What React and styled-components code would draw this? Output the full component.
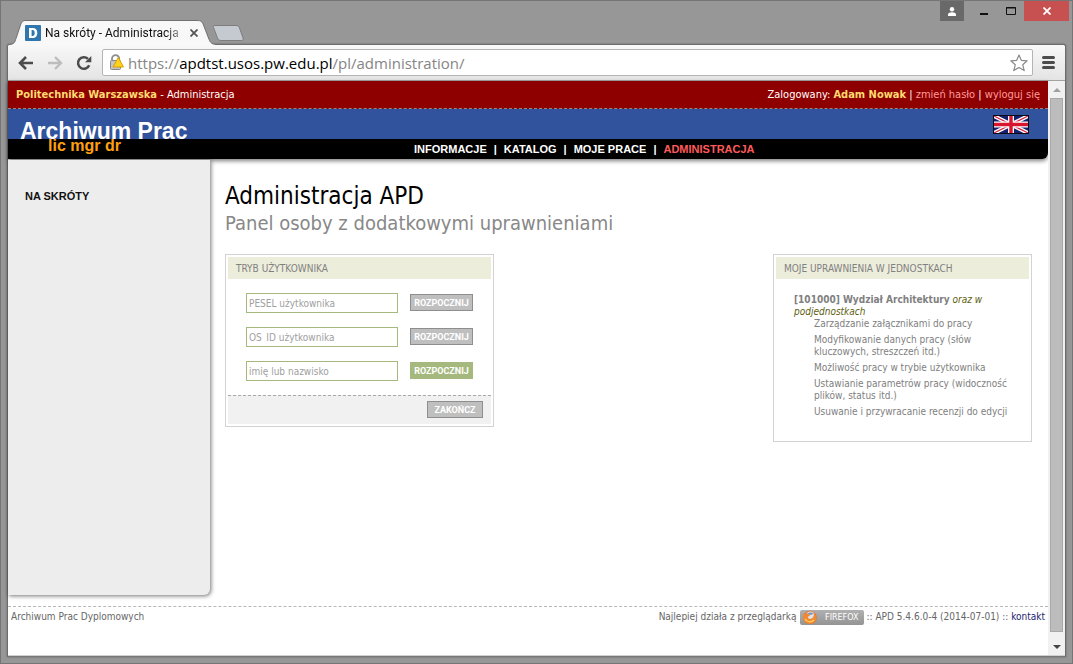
import React from 'react';
import styled, { createGlobalStyle } from 'styled-components';

const tahoma = "'DejaVu Sans Condensed', 'DejaVu Sans', sans-serif";
const arial = "'Liberation Sans', Arial, sans-serif";
const tabFont = "Roboto, 'Noto Sans', sans-serif";
const addressFont = "'Open Sans', 'Noto Sans', sans-serif";

const GlobalStyle = createGlobalStyle`
  * { box-sizing: border-box; }
  body { margin: 0; background: #979797; font-family: ${tahoma}; font-size: 10px; line-height: 12px; color: #808080; }
  h1, h2, p, ul { margin: 0; padding: 0; font-weight: normal; }
  ul { list-style: none; }
  a { text-decoration: none; color: inherit; }
  button { padding: 0; border: 0; background: none; color: inherit; font: inherit; }
`;

/* Browser window */

const Window = styled.div`
  display: flex;
  flex-direction: column;
  min-height: 100vh;
  padding: 0 6px 6px;
  border: 1px solid #757575;
  background: #979797;
`;

const TitleBar = styled.div`
  display: flex;
  justify-content: space-between;
  height: 43px;
  margin-right: -3px;
`;

const TabStrip = styled.div`
  display: flex;
  align-items: flex-end;
`;

const Tab = styled.div`
  position: relative;
  z-index: 1;
  display: flex;
  align-items: center;
  width: 206px;
  height: 25px;
  margin: 0 0 -1px 3px;
  padding: 0 18px 0 15px;
`;

const TabShape = styled.svg`
  position: absolute;
  left: 0;
  top: 0;
  z-index: -1;
`;

const TabTitle = styled.span`
  flex: 1;
  margin: 0 8px 0 4px;
  white-space: nowrap;
  font: 12px/16px ${tabFont};
  color: #111;
  mask-image: linear-gradient(to right, #000 88%, rgba(0, 0, 0, 0.3));
`;

const IconButton = styled.button`
  display: flex;
`;

const NewTab = styled.button`
  height: 16px;
  margin: 0 0 3px -4px;
`;

const Controls = styled.div`
  display: flex;
  height: 20px;
`;

const ControlButton = styled.button`
  display: flex;
  align-items: center;
  justify-content: ${(p) => p.$align || 'center'};
  width: ${(p) => p.$width}px;
  padding: 0 2px;
  background: ${(p) => p.$fill || 'transparent'};
`;

const Frame = styled.div`
  display: flex;
  flex: 1;
  flex-direction: column;
  border: 1px solid #6c6c6c;
  border-bottom-color: #777;
  border-radius: 3px 3px 0 0;
  background: #fff;
  box-shadow: 0 0 2px rgba(0, 0, 0, 0.4);
`;

const Toolbar = styled.div`
  display: flex;
  align-items: center;
  height: 36px;
  padding: 0 10px 0 10px;
  border-bottom: 1px solid #a2a2a2;
  border-radius: 2px 2px 0 0;
  background: linear-gradient(#f8f8f8, #e4e4e4);
`;

const ToolButton = styled.button`
  display: flex;
  align-items: center;
  width: 29px;
  height: 20px;
`;

const AddressBar = styled.div`
  display: flex;
  flex: 1;
  align-items: center;
  height: 27px;
  margin: 0 9px 0 -3px;
  padding: 0 4px 0 6px;
  border: 1px solid #b4b4b4;
  border-radius: 2px;
  background: #fff;
`;

const Address = styled.div`
  flex: 1;
  margin-left: 3px;
  font: 15px/22px ${addressFont};
  color: #858585;
  white-space: nowrap;

  b { font-weight: normal; color: #000; }
`;

const Viewport = styled.div`
  display: flex;
  flex: 1;
  border-bottom: 1px solid #d0d0d0;
`;

const Page = styled.div`
  display: flex;
  flex: 1;
  flex-direction: column;
  min-width: 0;
`;

const Scrollbar = styled.div`
  display: flex;
  flex-direction: column;
  align-items: center;
  width: 17px;
  background: #f1f1f1;
`;

const ScrollArrow = styled.button`
  display: flex;
  align-items: center;
  justify-content: center;
  width: 17px;
  height: 17px;
`;

const ScrollThumb = styled.div`
  flex: 1;
  width: 13px;
  margin-bottom: 6px;
  border: 1px solid #a8a8a8;
  background: #bcbcbc;
`;

/* Site header */

const Header = styled.header`
  border-radius: 0 0 6px 0;
  background: #000;
  box-shadow: 0 2px 4px rgba(0, 0, 0, 0.5);
`;

const TopBar = styled.div`
  display: flex;
  justify-content: space-between;
  height: 28px;
  padding: 7px 8px 0;
  border-bottom: 1px dashed #8c8c8c;
  background: #8e0000;
  font-size: 11px;
  line-height: 14px;
  color: #fff;

  b { color: #ffdb70; }
`;

const AccountLink = styled.a`
  color: #ff9c9c;
`;

const Banner = styled.div`
  display: flex;
  justify-content: space-between;
  height: 30px;
  padding: 6px 19px 0 12px;
  background: #31529c;
`;

const SiteName = styled.a`
  font: bold 23px/32px ${arial};
  color: #fff;
`;

const NavBar = styled.div`
  display: flex;
  align-items: center;
  height: 20px;
  padding-left: 40px;
`;

const Degrees = styled.span`
  align-self: flex-start;
  width: 366px;
  margin-top: -2px;
  font: bold 16px/18px ${arial};
  color: #ffa010;
`;

const Nav = styled.nav`
  display: flex;
  gap: 7px;
  font: bold 11px/14px ${arial};
  color: #fff;
`;

const NavLink = styled.a`
  color: ${(p) => (p.$active ? '#ff5a5a' : '#fff')};
`;

/* Site body */

const Body = styled.div`
  display: flex;
  flex: 1;
`;

const Sidebar = styled.aside`
  flex: 0 0 202px;
  margin: 1px 0 11px;
  padding: 29px 17px;
  border-radius: 0 0 6px 0;
  background: #ededed;
  box-shadow: 1px 1px 4px rgba(0, 0, 0, 0.55);
  font: bold 11px/14px ${arial};
  color: #111;
`;

const Main = styled.main`
  flex: 1;
  padding: 23px 16px 0 15px;
`;

const Title = styled.h1`
  font-size: 24px;
  line-height: 28px;
  color: #000;
`;

const Subtitle = styled.h2`
  font-size: 20px;
  line-height: 26px;
  color: #888;
`;

const Cards = styled.div`
  display: flex;
  align-items: flex-start;
  justify-content: space-between;
  margin-top: 18px;
`;

const Card = styled.section`
  width: ${(p) => p.$width}px;
  padding: 2px;
  border: 1px solid #d3d3d3;
  background: #fff;
`;

const CardTitle = styled.h2`
  padding: 6px 8px 4px;
  background: #ededdc;
  font-size: 10px;
  line-height: 12px;
  color: #808080;
`;

const Fields = styled.div`
  display: flex;
  flex-direction: column;
  gap: 14px;
  padding: 14px 18px;
`;

const Field = styled.form`
  display: flex;
  justify-content: space-between;
  align-items: flex-start;
`;

const TextInput = styled.input`
  width: 152px;
  height: 20px;
  padding: 0 2px;
  border: 1px solid #a5b97f;
  font: 10px/16px ${tahoma};

  &::placeholder { color: #a0a0a0; opacity: 1; }
`;

const ActionButton = styled.button`
  height: 17px;
  margin-top: 1px;
  width: ${(p) => p.$width}px;
  border: 1px solid ${(p) => (p.$active ? '#a5b97f' : '#8e8e8e')};
  background: ${(p) => (p.$active ? '#a5b97f' : '#bfbfbf')};
  font: bold 9px/14px ${tabFont};
  color: #fff;
`;

const CardFooter = styled.div`
  display: flex;
  justify-content: flex-end;
  height: 29px;
  padding: 4px 8px;
  border-top: 1px dashed #a8a8a8;
  background: #f1f1f1;
`;

const Rights = styled.div`
  padding: 15px 18px 21px;

  i { color: #606010; }
`;

const RightsList = styled.ul`
  display: flex;
  flex-direction: column;
  gap: 4px;
  padding-left: 20px;
`;

const Footer = styled.footer`
  display: flex;
  align-items: flex-start;
  justify-content: space-between;
  height: 49px;
  padding: 3px 3px 0;
  border-top: 1px dashed #b8b8b8;
  line-height: 14px;
  color: #666;
`;

const FooterInfo = styled.div`
  display: flex;
  gap: 3px;
`;

const FirefoxBadge = styled.a`
  display: flex;
  align-items: center;
  justify-content: space-between;
  width: 64px;
  height: 15px;
  padding: 0 5px 0 2px;
  border-radius: 2px;
  background: linear-gradient(#b0b0b0, #949494);
  font: 8px/15px 'DejaVu Sans', sans-serif;
  color: #fff;
`;

const ContactLink = styled.a`
  color: #1e1e70;
`;

const Favicon = () => (
  <svg width="16" height="16" viewBox="0 0 16 16">
    <rect width="16" height="16" rx="1" fill="#2f76ae" />
    <path d="M4 3h3.700c2.900 0 4.600 1.900 4.600 4.900s-1.800 5.100-4.600 5.100H4zM6.600 5.100v5.800h.9c1.400 0 2.200-1 2.200-2.900s-.8-2.900-2.200-2.900z" fill="#fff" fillRule="evenodd" />
  </svg>
);

const BackIcon = ({ color }) => (
  <svg width="16" height="14" viewBox="0 0 16 14" fill="none" stroke={color} strokeWidth="2.6">
    <path d="M15 7H3M8 1L2 7l6 6" />
  </svg>
);

const ForwardIcon = ({ color }) => (
  <svg width="16" height="14" viewBox="0 0 16 14" fill="none" stroke={color} strokeWidth="2.4">
    <path d="M1 7h12M8 1l6 6-6 6" />
  </svg>
);

const ReloadIcon = () => (
  <svg width="16" height="16" viewBox="0 0 16 16">
    <path d="M13.2 10.2A5.8 5.8 0 1 1 12 3.9" fill="none" stroke="#4c4c4c" strokeWidth="2.5" />
    <path d="M15.3 1v6.2H9z" fill="#4c4c4c" />
  </svg>
);

const LockWarningIcon = () => (
  <svg width="16" height="17" viewBox="0 0 16 17">
    <path d="M3 8V4.800a3.600 3.600 0 0 1 7.200 0V8" fill="none" stroke="#8e8e8e" strokeWidth="1.800" />
    <rect x="1.500" y="6.500" width="10" height="9" rx="1" fill="#c4c4c4" stroke="#888" />
    <path d="M9.300 3.500l5.200 9.500H4z" fill="#ffd21c" stroke="#d8a000" strokeLinejoin="round" />
  </svg>
);

const StarIcon = () => (
  <svg width="18" height="18" viewBox="0 0 18 18" fill="#fff" stroke="#8a8a8a" strokeWidth="1.2" strokeLinejoin="round">
    <path d="M9 1l2.3 5.3 5.9.5-4.5 3.9 1.5 5.9L9 13.4l-5.2 3.2 1.5-5.9L.8 6.8l5.9-.5z" />
  </svg>
);

const MenuIcon = () => (
  <svg width="13" height="13" viewBox="0 0 13 13" stroke="#4c4c4c" strokeWidth="3" strokeLinecap="round">
    <path d="M1.5 1.5h10M1.5 6.5h10M1.5 11.5h10" />
  </svg>
);

const UkFlag = () => (
  <svg width="36" height="19" viewBox="0 0 36 19">
    <rect width="36" height="19" fill="#14206e" />
    <path d="M1 1l34 17M35 1L1 18" stroke="#fff" strokeWidth="4" />
    <path d="M1 1l34 17M35 1L1 18" stroke="#d8233c" strokeWidth="1.3" />
    <path d="M18 1v17M1 9.5h34" stroke="#fff" strokeWidth="6" />
    <path d="M18 1v17M1 9.5h34" stroke="#d8152f" strokeWidth="3.4" />
    <rect x=".5" y=".5" width="35" height="18" fill="none" stroke="#0c0c18" />
  </svg>
);

const FirefoxIcon = () => (
  <svg width="16" height="15" viewBox="0 0 16 15">
    <circle cx="8" cy="7.500" r="6.800" fill="#e8702a" />
    <circle cx="8.400" cy="6" r="4.600" fill="#dfe4ee" />
    <path d="M5 4c1.500-1.500 4.500-2 6.500-.5L9 5z" fill="#7f93b8" />
    <path d="M1.800 3l2.200.8c1.500-.2 2.800.3 4 1.200-.3 1.200-2.200 1.200-2 2.400.5 2 3.800 2 5.200-.4.800-1.400.8-3 .2-4.600 2.800 2.200 4 6 1.600 9-3.200 3.500-9 2.800-11.200-1C1 8 .8 5.500 1.800 3z" fill="#f08a30" />
    <path d="M3 9c2 3.400 6.500 3.800 9 1" fill="none" stroke="#ffd060" strokeWidth="1.400" />
  </svg>
);

const userModes = [
  { id: 'pesel', label: 'PESEL użytkownika' },
  { id: 'osid', label: 'OS_ID użytkownika' },
  { id: 'name', label: 'imię lub nazwisko', active: true },
];

const rights = [
  'Zarządzanie załącznikami do pracy',
  'Modyfikowanie danych pracy (słów kluczowych, streszczeń itd.)',
  'Możliwość pracy w trybie użytkownika',
  'Ustawianie parametrów pracy (widoczność plików, status itd.)',
  'Usuwanie i przywracanie recenzji do edycji',
];

const BrowserTitleBar = () => (
  <TitleBar>
    <TabStrip>
      <Tab>
        <TabShape width="206" height="25" viewBox="0 0 206 25">
          <path d="M0 24.500C5 24 5 21 6.500 17L10.500 5C12 1.500 13 .5 16 .5H187C191 .5 192 1.500 193.500 5L198.500 18C200 22 201 24 206 24.500V25H0z" fill="#f8f8f8" />
          <path d="M0 24.500C5 24 5 21 6.500 17L10.500 5C12 1.500 13 .5 16 .5H187C191 .5 192 1.500 193.500 5L198.500 18C200 22 201 24 206 24.500" fill="none" stroke="#707070" />
        </TabShape>
        <Favicon />
        <TabTitle>Na skróty - Administracja</TabTitle>
        <IconButton aria-label="Zamknij kartę">
          <svg width="8" height="8" viewBox="0 0 8 8" stroke="#555" strokeWidth="1.800">
            <path d="M.5.5l7 7M7.500.5l-7 7" />
          </svg>
        </IconButton>
      </Tab>
      <NewTab aria-label="Nowa karta">
        <svg width="32" height="16" viewBox="0 0 32 16">
          <path d="M3 .5h21c2 0 3 1 3.500 2.500l3.500 10c.5 1.500 0 2.500-1.500 2.500H9c-2 0-3-1-3.500-2.500L1.500 2.500C1 1 1.500.5 3 .5z" fill="#c5cad0" stroke="#7d7d7d" />
        </svg>
      </NewTab>
    </TabStrip>
    <Controls>
      <ControlButton $width={24} $fill="#696969" aria-label="Profil">
        <svg width="10" height="9" viewBox="0 0 10 9" fill="#fff">
          <circle cx="5" cy="2.200" r="2.200" />
          <path d="M1 9V7.500C1 6 3 5.200 5 5.200s4 .8 4 2.300V9z" />
        </svg>
      </ControlButton>
      <ControlButton $width={40} aria-label="Minimalizuj">
        <svg width="8" height="8" viewBox="0 0 8 8"><rect y="6" width="8" height="2" fill="#111" /></svg>
      </ControlButton>
      <ControlButton $width={20} $align="flex-start" aria-label="Maksymalizuj">
        <svg width="10" height="8" viewBox="0 0 10 8" fill="none" stroke="#111"><path d="M.5.5h9v7h-9zM0 1h10" /></svg>
      </ControlButton>
      <ControlButton $width={45} $fill="#c75050" aria-label="Zamknij">
        <svg width="8" height="8" viewBox="0 0 8 8" stroke="#fff" strokeWidth="1.800"><path d="M.5.5l7 7M7.500.5l-7 7" /></svg>
      </ControlButton>
    </Controls>
  </TitleBar>
);

export default function App() {
  return (
    <Window>
      <GlobalStyle />
      <BrowserTitleBar />
      <Frame>
        <Toolbar>
          <ToolButton aria-label="Wstecz"><BackIcon color="#4c4c4c" /></ToolButton>
          <ToolButton aria-label="Dalej"><ForwardIcon color="#bdbdbd" /></ToolButton>
          <ToolButton aria-label="Odśwież"><ReloadIcon /></ToolButton>
          <AddressBar>
            <LockWarningIcon />
            <Address>https://<b>apdtst.usos.pw.edu.pl</b>/pl/administration/</Address>
            <StarIcon />
          </AddressBar>
          <IconButton aria-label="Menu"><MenuIcon /></IconButton>
        </Toolbar>
        <Viewport>
          <Page>
            <Header>
              <TopBar>
                <div><b>Politechnika Warszawska</b> - Administracja</div>
                <div>
                  Zalogowany: <b>Adam Nowak</b> | <AccountLink href="#haslo">zmień hasło</AccountLink> | <AccountLink href="#wyloguj">wyloguj się</AccountLink>
                </div>
              </TopBar>
              <Banner>
                <SiteName href="#start">Archiwum Prac</SiteName>
                <a href="#en" aria-label="English"><UkFlag /></a>
              </Banner>
              <NavBar>
                <Degrees>lic mgr dr</Degrees>
                <Nav>
                  <NavLink href="#informacje">INFORMACJE</NavLink>|
                  <NavLink href="#katalog">KATALOG</NavLink>|
                  <NavLink href="#prace">MOJE PRACE</NavLink>|
                  <NavLink href="#administracja" $active>ADMINISTRACJA</NavLink>
                </Nav>
              </NavBar>
            </Header>
            <Body>
              <Sidebar>NA SKRÓTY</Sidebar>
              <Main>
                <Title>Administracja APD</Title>
                <Subtitle>Panel osoby z dodatkowymi uprawnieniami</Subtitle>
                <Cards>
                  <Card $width={269}>
                    <CardTitle>TRYB UŻYTKOWNIKA</CardTitle>
                    <Fields>
                      {userModes.map((mode) => (
                        <Field key={mode.id}>
                          <TextInput id={mode.id} aria-label={mode.label} placeholder={mode.label} />
                          <ActionButton type="button" $width={63} $active={mode.active}>ROZPOCZNIJ</ActionButton>
                        </Field>
                      ))}
                    </Fields>
                    <CardFooter>
                      <ActionButton type="button" $width={56}>ZAKOŃCZ</ActionButton>
                    </CardFooter>
                  </Card>
                  <Card $width={259}>
                    <CardTitle>MOJE UPRAWNIENIA W JEDNOSTKACH</CardTitle>
                    <Rights>
                      <p><b>[101000] Wydział Architektury</b> <i>oraz w podjednostkach</i></p>
                      <RightsList>
                        {rights.map((right) => <li key={right}>{right}</li>)}
                      </RightsList>
                    </Rights>
                  </Card>
                </Cards>
              </Main>
            </Body>
            <Footer>
              <div>Archiwum Prac Dyplomowych</div>
              <FooterInfo>
                <span>Najlepiej działa z przeglądarką</span>
                <FirefoxBadge href="#firefox"><FirefoxIcon />FIREFOX</FirefoxBadge>
                <span>:: APD 5.4.6.0-4 (2014-07-01) :: <ContactLink href="#kontakt">kontakt</ContactLink></span>
              </FooterInfo>
            </Footer>
          </Page>
          <Scrollbar>
            <ScrollArrow aria-label="Przewiń w górę">
              <svg width="8" height="4" viewBox="0 0 8 4" fill="#a0a0a0"><path d="M0 4l4-4 4 4z" /></svg>
            </ScrollArrow>
            <ScrollThumb />
            <ScrollArrow aria-label="Przewiń w dół">
              <svg width="8" height="4" viewBox="0 0 8 4" fill="#444"><path d="M0 0l4 4 4-4z" /></svg>
            </ScrollArrow>
          </Scrollbar>
        </Viewport>
      </Frame>
    </Window>
  );
}
